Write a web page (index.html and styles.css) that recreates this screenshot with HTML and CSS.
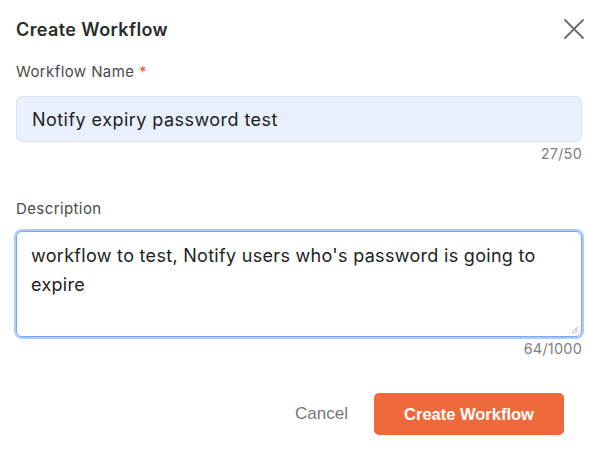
FILE: index.html
```html
<!DOCTYPE html>
<html>
<head>
<meta charset="utf-8">
<link rel="stylesheet" href="styles.css">
</head>
<body>
<div class="dialog">
  <div class="header">
    <h1 class="title">Create Workflow</h1>
    <button class="close" aria-label="Close">
      <svg width="22" height="22" viewBox="0 0 22 22"><path d="M2 2 L20 20 M20 2 L2 20" stroke="#6b6b6b" stroke-width="1.8" fill="none" stroke-linecap="round"/></svg>
    </button>
  </div>
  <div class="field">
    <label class="label">Workflow Name <span class="req">*</span></label>
    <div class="input filled">Notify expiry password test</div>
    <div class="count">27/50</div>
  </div>
  <div class="field desc">
    <label class="label">Description</label>
    <div class="textarea">workflow to test, Notify users who's password is going to expire
      <svg class="grip" width="8" height="8" viewBox="0 0 8 8"><path d="M7 1 L1 7 M7 4 L4 7" stroke="#aaa" stroke-width="1"/></svg>
    </div>
    <div class="count">64/1000</div>
  </div>
  <div class="actions">
    <button class="cancel">Cancel</button>
    <button class="primary">Create Workflow</button>
  </div>
</div>
</body>
</html>
```
FILE: styles.css
```css
html, body {
  margin: 0;
  padding: 0;
  background: #fff;
}
body {
  font-family: "Inter", "Noto Sans", sans-serif;
  color: #333;
}
.dialog {
  width: 566px;
  padding: 0 15px 0 16px;
}
.header {
  display: flex;
  justify-content: space-between;
  align-items: center;
  height: 58px;
}
.title {
  margin: 0;
  font-size: 18px;
  font-weight: 600;
  letter-spacing: 0.4px;
  color: #2b2b2b;
}
.close {
  border: 0;
  background: none;
  padding: 0;
  margin-right: -3px;
  display: flex;
}
.label {
  display: block;
  font-size: 15px;
  letter-spacing: 0.4px;
  color: #4a4a4a;
  height: 26px;
  line-height: 26px;
  margin-top: 1px;
}
.req { color: #e8553b; }
.input {
  margin-top: 11px;
  height: 44px;
  border: 1px solid #dbe3ef;
  border-radius: 6px;
  background: #e8f0fe;
  font-size: 18px;
  letter-spacing: 0.45px;
  line-height: 46px;
  padding: 0 15px;
  color: #222;
}
.count {
  text-align: right;
  font-size: 14.5px;
  letter-spacing: 0.2px;
  color: #808080;
  line-height: 16px;
  margin-top: 4px;
}
.desc { margin-top: 34px; }
.textarea {
  position: relative;
  margin-top: 9px;
  height: 95px;
  border: 1px solid #7aa7f0;
  box-shadow: 0 0 0 2px #aecbfa;
  border-radius: 6px;
  font-size: 18px;
  letter-spacing: 0.3px;
  line-height: 29px;
  padding: 9px 14px 0;
  color: #222;
  box-sizing: content-box;
}
.grip {
  position: absolute;
  right: 2px;
  bottom: 2px;
}
.actions {
  display: flex;
  justify-content: flex-end;
  align-items: center;
  gap: 26px;
  margin-top: 36px;
  padding-right: 18px;
}
.cancel {
  border: 0;
  background: none;
  font-family: "Liberation Sans", Arial, sans-serif;
  font-size: 17px;
  color: #777;
  padding: 0;
}
.primary {
  border: 0;
  border-radius: 5px;
  background: #ee6a3b;
  color: #fff;
  font-family: "Liberation Sans", Arial, sans-serif;
  font-size: 16.5px;
  font-weight: bold;
  width: 190px;
  height: 42px;
}
```
